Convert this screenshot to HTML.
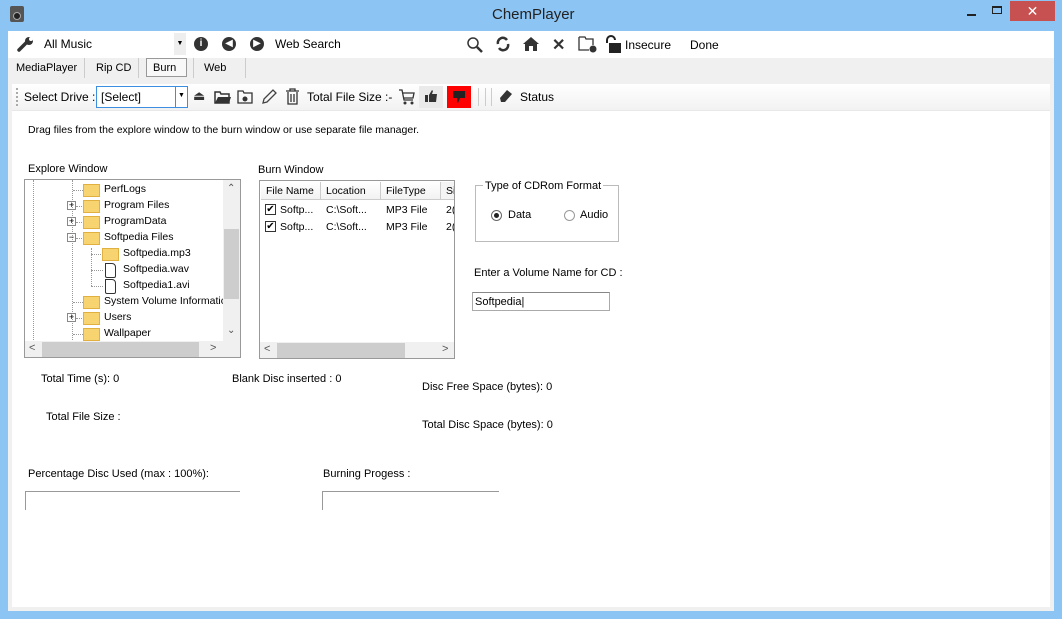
<!DOCTYPE html>
<html><head><style>
*{margin:0;padding:0;box-sizing:border-box}
body{width:1062px;height:619px;background:#8cc4f4;font-family:"Liberation Sans",sans-serif;font-size:11px;color:#000;position:relative;overflow:hidden}
.a{position:absolute;white-space:nowrap}
.ic{position:absolute}
.tr{font-size:10.5px}
</style></head><body>
<!-- title -->
<div class="a" style="left:10px;top:6px;width:14px;height:16px;background:#555;border-radius:2px"></div>
<div class="a" style="left:13px;top:12px;width:8px;height:8px;background:#222;border-radius:50%;border:1px solid #aaa"></div>
<div class="a" style="left:492px;top:6px;font-size:15px;color:#222">ChemPlayer</div>
<div class="a" style="left:967px;top:14px;width:9px;height:2px;background:#222"></div>
<div class="a" style="left:992px;top:6px;width:10px;height:8px;border:1px solid #222;border-top-width:2px"></div>
<div class="a" style="left:1010px;top:1px;width:45px;height:20px;background:#c75050;color:#fff;text-align:center;font-size:14px;line-height:20px">✕</div>
<!-- body area -->
<div class="a" style="left:8px;top:31px;width:1046px;height:580px;background:#f0f0f0"></div>
<!-- row1 -->
<div class="a" style="left:8px;top:31px;width:1046px;height:27px;background:#fff"></div>
<svg class="ic" style="left:17px;top:36px" width="18" height="16" viewBox="0 0 18 16"><path d="M2 14 L10 6" stroke="#333" stroke-width="3.5" stroke-linecap="round"/><circle cx="12" cy="5" r="4" fill="#333"/><circle cx="14" cy="3" r="2" fill="#fff"/></svg>
<div class="a" style="left:44px;top:37px;font-size:12px">All Music</div>
<div class="a" style="left:174px;top:33px;width:12px;height:22px;background:#eee;font-size:7px;line-height:22px;text-align:center">▼</div>
<div class="a" style="left:194px;top:37px;width:14px;height:14px;border-radius:50%;background:#333;color:#fff;font-size:10px;font-weight:bold;text-align:center;line-height:14px">i</div>
<div class="a" style="left:222px;top:37px;width:14px;height:14px;border-radius:50%;background:#333;color:#fff;font-size:10px;text-align:center;line-height:14px">◀</div>
<div class="a" style="left:250px;top:37px;width:14px;height:14px;border-radius:50%;background:#333;color:#fff;font-size:10px;text-align:center;line-height:14px">▶</div>
<div class="a" style="left:275px;top:37px;font-size:12px">Web Search</div>
<svg class="ic" style="left:466px;top:36px" width="18" height="17"><circle cx="7" cy="7" r="5" fill="none" stroke="#333" stroke-width="1.5"/><path d="M11 11 L16 16" stroke="#333" stroke-width="2.5"/></svg>
<svg class="ic" style="left:495px;top:36px" width="16" height="16"><path d="M3 8 A5 5 0 0 1 12 4 M13 8 A5 5 0 0 1 4 12" fill="none" stroke="#333" stroke-width="2.5"/></svg>
<svg class="ic" style="left:522px;top:35px" width="18" height="17"><path d="M1 9 L9 2 L17 9 L15 9 L15 16 L3 16 L3 9Z" fill="#333"/><rect x="7" y="11" width="4" height="5" fill="#fff"/></svg>
<div class="a" style="left:552px;top:35px;font-size:16px;font-weight:bold;color:#333">✕</div>
<svg class="ic" style="left:578px;top:35px" width="20" height="18"><path d="M1 2 L7 2 L8 4 L15 4 L15 10 M11 15 L1 15 L1 2" fill="none" stroke="#333" stroke-width="1.3"/><circle cx="15" cy="14" r="3.5" fill="#333"/></svg>
<svg class="ic" style="left:604px;top:35px" width="18" height="18"><path d="M3 8 L3 5 A4 4 0 0 1 11 5" fill="none" stroke="#222" stroke-width="2"/><rect x="5" y="8" width="12" height="10" fill="#222"/></svg>
<div class="a" style="left:625px;top:38px;font-size:12px">Insecure</div>
<div class="a" style="left:690px;top:38px;font-size:12px">Done</div>
<!-- row2 tabs -->
<div class="a" style="left:16px;top:62px">MediaPlayer</div>
<div class="a" style="left:84px;top:58px;width:1px;height:20px;background:#ccc"></div>
<div class="a" style="left:96px;top:62px">Rip CD</div>
<div class="a" style="left:138px;top:58px;width:1px;height:20px;background:#ccc"></div>
<div class="a" style="left:146px;top:58px;width:41px;height:19px;border:1px solid #999;background:#f8f8f8;padding:3px 0 0 6px">Burn</div>
<div class="a" style="left:193px;top:58px;width:1px;height:20px;background:#ccc"></div>
<div class="a" style="left:204px;top:62px">Web</div>
<div class="a" style="left:245px;top:58px;width:1px;height:20px;background:#ccc"></div>
<!-- row3 -->
<div class="a" style="left:12px;top:84px;width:1038px;height:26px;background:linear-gradient(#fff,#f2f2f2)"></div>
<div class="a" style="left:16px;top:88px;width:2px;height:18px;border-left:2px dotted #aaa"></div>
<div class="a" style="left:24px;top:90px;font-size:12px">Select Drive :</div>
<div class="a" style="left:96px;top:86px;width:92px;height:22px;border:1px solid #3c8ee0;background:#fff;padding:3px 4px;font-size:12px">[Select]</div>
<div class="a" style="left:175px;top:87px;width:1px;height:20px;background:#3c8ee0"></div>
<div class="a" style="left:178px;top:92px;font-size:7px">▼</div>
<div class="a" style="left:193px;top:88px;font-size:13px;color:#333">⏏</div>
<svg class="ic" style="left:214px;top:90px" width="18" height="14"><path d="M1 2 L6 2 L7 4 L15 4 L15 13 L1 13Z" fill="none" stroke="#333" stroke-width="1.5"/><path d="M1 13 L4 7 L17 7 L15 13" fill="#333"/></svg>
<svg class="ic" style="left:237px;top:89px" width="17" height="15"><path d="M1 2 L6 2 L7 4 L15 4 L15 14 L1 14Z" fill="none" stroke="#333" stroke-width="1.3"/><circle cx="8" cy="10" r="2.5" fill="#333"/></svg>
<svg class="ic" style="left:261px;top:88px" width="17" height="17"><path d="M2 15 L3 11 L12 2 L15 5 L6 14Z" fill="none" stroke="#444" stroke-width="1.3"/></svg>
<svg class="ic" style="left:285px;top:88px" width="15" height="17"><path d="M1 3 L14 3 M5 3 L5 1 L10 1 L10 3 M3 4 L3 16 L12 16 L12 4 M6 6 L6 14 M9 6 L9 14" fill="none" stroke="#333" stroke-width="1.3"/></svg>
<div class="a" style="left:307px;top:90px;font-size:12px">Total File Size :-</div>
<svg class="ic" style="left:398px;top:88px" width="18" height="18"><path d="M1 2 L4 2 L6 12 L15 12 M5 5 L16 5 L15 10 L6 10" fill="none" stroke="#333" stroke-width="1.3"/><circle cx="7" cy="15" r="1.5" fill="#333"/><circle cx="14" cy="15" r="1.5" fill="#333"/></svg>
<div class="a" style="left:419px;top:86px;width:24px;height:22px;background:#eaeaea"></div>
<svg class="ic" style="left:424px;top:89px" width="14" height="14"><path d="M1 6 L4 6 L4 13 L1 13Z M5 6 L8 1 L9 2 L8 5 L13 5 L12 13 L5 13Z" fill="#333"/></svg>
<div class="a" style="left:447px;top:86px;width:24px;height:22px;background:#f00"></div>
<svg class="ic" style="left:452px;top:90px" width="14" height="14"><path d="M1 1 L13 1 L13 8 L8 8 L6 13 L5 12 L5 8 L1 8Z" fill="#222"/></svg>
<div class="a" style="left:478px;top:88px;width:14px;height:18px;border-left:1px solid #ccc;border-right:1px solid #ccc"></div>
<div class="a" style="left:485px;top:88px;width:1px;height:18px;background:#ccc"></div>
<svg class="ic" style="left:498px;top:88px" width="16" height="16"><path d="M2 10 L9 2 L14 6 L7 14 L3 14Z" fill="#333"/></svg>
<div class="a" style="left:520px;top:90px;font-size:12px">Status</div>
<!-- content -->
<div class="a" style="left:12px;top:110px;width:1038px;height:497px;background:#fff;border-top:1px solid #e8e8e8"></div>
<div class="a" style="left:28px;top:124px;font-size:10.5px">Drag files from the explore window to the burn window or use separate file manager.</div>
<div class="a" style="left:28px;top:163px">Explore Window</div>
<div class="a" style="left:258px;top:164px">Burn Window</div>
<!-- explore tree -->
<div class="a tr" style="left:24px;top:179px;width:217px;height:179px;border:1px solid #999;background:#fff;overflow:hidden">
 <div class="a" style="left:8px;top:0;height:162px;border-left:1px dotted #999"></div>
 <div class="a" style="left:47px;top:0;height:162px;border-left:1px dotted #999"></div>
 <div class="a" style="left:66px;top:68px;height:38px;border-left:1px dotted #999"></div>
 <div style="position:absolute;left:0;top:2px;width:200px">
  <div style="height:16px;position:relative"><span class="a" style="left:48px;top:8px;width:12px;border-top:1px dotted #999"></span><span class="a" style="left:58px;top:2px;width:17px;height:13px;background:#f8d471;border:1px solid #e0b040"></span><span class="a" style="left:79px;top:1px">PerfLogs</span></div>
  <div style="height:16px;position:relative"><span class="a" style="left:42px;top:3px;width:9px;height:9px;border:1px solid #888;font-size:9px;line-height:7px;text-align:center">+</span><span class="a" style="left:51px;top:8px;width:8px;border-top:1px dotted #999"></span><span class="a" style="left:58px;top:2px;width:17px;height:13px;background:#f8d471;border:1px solid #e0b040"></span><span class="a" style="left:79px;top:1px">Program Files</span></div>
  <div style="height:16px;position:relative"><span class="a" style="left:42px;top:3px;width:9px;height:9px;border:1px solid #888;font-size:9px;line-height:7px;text-align:center">+</span><span class="a" style="left:51px;top:8px;width:8px;border-top:1px dotted #999"></span><span class="a" style="left:58px;top:2px;width:17px;height:13px;background:#f8d471;border:1px solid #e0b040"></span><span class="a" style="left:79px;top:1px">ProgramData</span></div>
  <div style="height:16px;position:relative"><span class="a" style="left:42px;top:3px;width:9px;height:9px;border:1px solid #888;font-size:9px;line-height:7px;text-align:center">−</span><span class="a" style="left:51px;top:8px;width:8px;border-top:1px dotted #999"></span><span class="a" style="left:58px;top:2px;width:17px;height:13px;background:#f8d471;border:1px solid #e0b040"></span><span class="a" style="left:79px;top:1px">Softpedia Files</span></div>
  <div style="height:16px;position:relative"><span class="a" style="left:66px;top:8px;width:12px;border-top:1px dotted #999"></span><span class="a" style="left:77px;top:2px;width:17px;height:13px;background:#f8d471;border:1px solid #e0b040"></span><span class="a" style="left:98px;top:1px">Softpedia.mp3</span></div>
  <div style="height:16px;position:relative"><span class="a" style="left:66px;top:8px;width:12px;border-top:1px dotted #999"></span><span class="a" style="left:80px;top:1px;width:11px;height:15px;border:1px solid #333;border-radius:0 4px 2px 2px"></span><span class="a" style="left:98px;top:1px">Softpedia.wav</span></div>
  <div style="height:16px;position:relative"><span class="a" style="left:66px;top:8px;width:12px;border-top:1px dotted #999"></span><span class="a" style="left:80px;top:1px;width:11px;height:15px;border:1px solid #333;border-radius:0 4px 2px 2px"></span><span class="a" style="left:98px;top:1px">Softpedia1.avi</span></div>
  <div style="height:16px;position:relative"><span class="a" style="left:48px;top:8px;width:12px;border-top:1px dotted #999"></span><span class="a" style="left:58px;top:2px;width:17px;height:13px;background:#f8d471;border:1px solid #e0b040"></span><span class="a" style="left:79px;top:1px">System Volume Informatic</span></div>
  <div style="height:16px;position:relative"><span class="a" style="left:42px;top:3px;width:9px;height:9px;border:1px solid #888;font-size:9px;line-height:7px;text-align:center">+</span><span class="a" style="left:51px;top:8px;width:8px;border-top:1px dotted #999"></span><span class="a" style="left:58px;top:2px;width:17px;height:13px;background:#f8d471;border:1px solid #e0b040"></span><span class="a" style="left:79px;top:1px">Users</span></div>
  <div style="height:16px;position:relative"><span class="a" style="left:48px;top:8px;width:12px;border-top:1px dotted #999"></span><span class="a" style="left:58px;top:2px;width:17px;height:13px;background:#f8d471;border:1px solid #e0b040"></span><span class="a" style="left:79px;top:1px">Wallpaper</span></div>
 </div>
 <div class="a" style="left:198px;top:0;width:17px;height:161px;background:#f0f0f0"></div>
 <div class="a" style="left:199px;top:49px;width:15px;height:70px;background:#cdcdcd"></div>
 <div class="a" style="left:202px;top:3px;font-size:10px;color:#555">⌃</div>
 <div class="a" style="left:202px;top:145px;font-size:10px;color:#555">⌄</div>
 <div class="a" style="left:0;top:161px;width:215px;height:17px;background:#f0f0f0"></div>
 <div class="a" style="left:17px;top:162px;width:157px;height:15px;background:#cdcdcd"></div>
 <div class="a" style="left:4px;top:162px;font-size:11px;color:#555">&lt;</div>
 <div class="a" style="left:185px;top:162px;font-size:11px;color:#555">&gt;</div>
</div>
<!-- burn list -->
<div class="a tr" style="left:259px;top:180px;width:196px;height:179px;border:1px solid #999;background:#fff;overflow:hidden">
 <div class="a" style="left:1px;top:1px;width:60px;height:18px;border:1px solid #ccc;border-top:0;border-left:0;background:linear-gradient(#fff,#f2f2f2);padding:3px 5px">File Name</div>
 <div class="a" style="left:61px;top:1px;width:60px;height:18px;border-right:1px solid #ccc;border-bottom:1px solid #ccc;background:linear-gradient(#fff,#f2f2f2);padding:3px 5px">Location</div>
 <div class="a" style="left:121px;top:1px;width:60px;height:18px;border-right:1px solid #ccc;border-bottom:1px solid #ccc;background:linear-gradient(#fff,#f2f2f2);padding:3px 5px">FileType</div>
 <div class="a" style="left:181px;top:1px;width:30px;height:18px;border-bottom:1px solid #ccc;background:#f4f4f4;padding:3px 5px">Si</div>
 <div class="a" style="left:5px;top:23px;width:11px;height:11px;border:1px solid #333;font-size:10px;line-height:9px;text-align:center">✔</div>
 <div class="a" style="left:20px;top:23px">Softp...</div><div class="a" style="left:66px;top:23px">C:\Soft...</div><div class="a" style="left:126px;top:23px">MP3 File</div><div class="a" style="left:186px;top:23px">2(</div>
 <div class="a" style="left:5px;top:40px;width:11px;height:11px;border:1px solid #333;font-size:10px;line-height:9px;text-align:center">✔</div>
 <div class="a" style="left:20px;top:40px">Softp...</div><div class="a" style="left:66px;top:40px">C:\Soft...</div><div class="a" style="left:126px;top:40px">MP3 File</div><div class="a" style="left:186px;top:40px">2(</div>
 <div class="a" style="left:0;top:161px;width:196px;height:17px;background:#f0f0f0"></div>
 <div class="a" style="left:17px;top:162px;width:128px;height:15px;background:#cdcdcd"></div>
 <div class="a" style="left:4px;top:162px;font-size:11px;color:#555">&lt;</div>
 <div class="a" style="left:182px;top:162px;font-size:11px;color:#555">&gt;</div>
</div>
<!-- CD format -->
<div class="a" style="left:475px;top:185px;width:144px;height:57px;border:1px solid #bbb"></div>
<div class="a" style="left:483px;top:180px;background:#fff;padding:0 2px">Type of CDRom Format</div>
<div class="a" style="left:491px;top:210px;width:11px;height:11px;border:1px solid #666;border-radius:50%"></div>
<div class="a" style="left:494px;top:213px;width:5px;height:5px;background:#222;border-radius:50%"></div>
<div class="a" style="left:508px;top:209px">Data</div>
<div class="a" style="left:564px;top:210px;width:11px;height:11px;border:1px solid #999;border-radius:50%"></div>
<div class="a" style="left:580px;top:209px">Audio</div>
<div class="a" style="left:474px;top:267px">Enter a Volume Name for CD :</div>
<div class="a" style="left:472px;top:292px;width:138px;height:19px;border:1px solid #aaa;border-top-color:#888;padding:3px 2px">Softpedia|</div>
<!-- stats -->
<div class="a" style="left:41px;top:373px">Total Time (s): 0</div>
<div class="a" style="left:232px;top:373px">Blank Disc inserted :  0</div>
<div class="a" style="left:422px;top:381px">Disc Free Space (bytes): 0</div>
<div class="a" style="left:46px;top:411px">Total File Size :</div>
<div class="a" style="left:422px;top:419px">Total Disc Space (bytes): 0</div>
<div class="a" style="left:28px;top:468px">Percentage Disc Used  (max : 100%):</div>
<div class="a" style="left:323px;top:468px">Burning Progess  :</div>
<div class="a" style="left:25px;top:491px;width:215px;height:19px;border-top:1px solid #999;border-left:1px solid #999"></div>
<div class="a" style="left:322px;top:491px;width:177px;height:19px;border-top:1px solid #999;border-left:1px solid #999"></div>
</body></html>
